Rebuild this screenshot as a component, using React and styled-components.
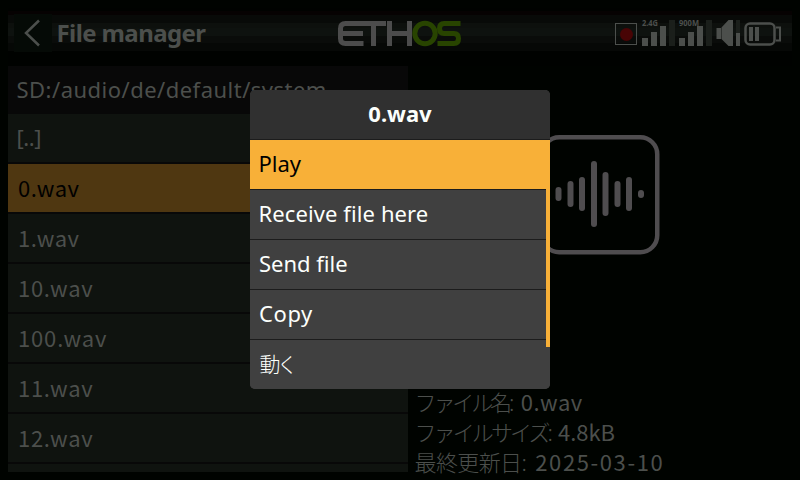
import React from "react";
import styled, { createGlobalStyle } from "styled-components";

const Global = createGlobalStyle`
  * { box-sizing: border-box; }
  body { margin: 0; background: #000300; }
`;

const Screen = styled.div`
  position: relative;
  width: 800px;
  height: 480px;
  overflow: hidden;
  display: flex;
  flex-direction: column;
  padding: 8px 8px 0;
  background: #000300;
  color: #4c4f4c;
  font: 400 22px/30px "Noto Sans", "Noto Sans CJK JP", sans-serif;
  white-space: pre;
`;

const TopBar = styled.header`
  display: grid;
  grid-template-columns: 1fr 126px 1fr;
  height: 58px;
  flex: none;
  background: linear-gradient(
    #000200 0 3px, #060202 3px 7px, #080a08 7px 15px, #0d100d 15px 20px,
    #0e120f 20px 28px, #0a0c0a 28px 35px, #060806 35px 43px, #000200 43px
  );
`;

const TitleGroup = styled.div`
  display: flex;
  padding: 6px 0 0 6px;
`;

const BackButton = styled.button`
  width: 38px;
  height: 38px;
  padding: 0;
  border: 0;
  background: #050a06;
  svg { display: block; }
`;

const Title = styled.h1`
  margin: 4px 0 0 4.5px;
  font-size: 24px;
  line-height: 30px;
  font-weight: 700;
  letter-spacing: -0.6px;
`;

const LogoSlot = styled.div`
  padding: 12px 0 0;
`;

const StatusArea = styled.div`
  display: flex;
  justify-content: flex-end;
  padding: 10px 10px 0 0;
`;

const Content = styled.main`
  display: grid;
  grid-template-columns: 400px 1fr;
  height: 406px;
`;

const FileList = styled.section`
  display: flex;
  flex-direction: column;
  gap: 2px;
  overflow: hidden;
  background: #080808;
`;

const Row = styled.div`
  flex: none;
  height: 48px;
  padding: 8px 0 0 8.5px;
  letter-spacing: ${(p) => p.$track ?? 0}px;
  background: ${(p) => (p.$selected ? "#4f3711" : "#0f130f")};
  color: ${(p) => (p.$selected ? "#000" : "inherit")};
`;

const PathRow = styled(Row)`
  height: 46px;
  background: #080808;
`;

const FileRow = styled(Row)`
  padding: 8px 0 0 10px;
  font-family: "Noto Sans CJK JP", sans-serif;
`;

const Preview = styled.section`
  display: flex;
  flex-direction: column;
  justify-content: space-between;
  padding: 69px 0 0 8px;
  > svg { margin-left: 124px; }
`;

const Details = styled.div`
  margin: 0 0 -5px -1.5px;
  font-weight: 300;
`;

const Detail = styled.div`
  height: 30px;
  letter-spacing: ${(p) => p.$track ?? 0}px;
`;

const Value = styled.span`
  margin-left: ${(p) => p.$gap ?? 0}px;
  font-family: "Noto Sans CJK JP", sans-serif;
  font-weight: 400;
  line-height: 1;
  letter-spacing: ${(p) => p.$track ?? 0}px;
`;

const Dialog = styled.div`
  position: absolute;
  left: 250px;
  top: 90px;
  width: 300px;
  height: 299px;
  overflow: hidden;
  border-radius: 5px;
  background: #404040;
  color: #fcfffc;
`;

const DialogTitle = styled.h2`
  margin: 0;
  height: 50px;
  padding-top: 8px;
  border-bottom: 1px solid #1c1c1c;
  background: #303030;
  text-align: center;
  font-size: 22px;
  line-height: 30px;
  font-weight: 700;
`;

const MenuItem = styled.div`
  height: 50px;
  padding: 8px 0 0 ${(p) => p.$x ?? 8}px;
  border-bottom: 1px solid #1c1c1c;
  background: ${(p) => (p.$active ? "#f8b038" : "#404040")};
  color: ${(p) => (p.$active ? "#000" : "inherit")};
  letter-spacing: ${(p) => p.$track ?? 0}px;
`;

const KanaMenuItem = styled(MenuItem)`
  padding-top: 9px;
  font-size: 21px;
  font-weight: 300;
`;

const ScrollThumb = styled.div`
  position: absolute;
  right: 0;
  top: 50px;
  width: 4px;
  height: 207px;
  background: #f8b038;
`;

const SignalLabel = styled.text`
  font: 700 8.5px "Noto Sans", sans-serif;
  fill: #4c4f4c;
`;

function Logo() {
  return (
    <svg width="126" height="28" fill="none" strokeWidth="5">
      <g stroke="#4c4c4c">
        <path d="M49 3.500H8.500Q3.500 3.500 3.500 8.500V18.500Q3.500 23.500 8.500 23.500H26.500M5 13.500H26" />
        <path d="M36.500 3.500V26" />
        <path d="M52.500 1V26M72.500 1V26M52 13.500H73" />
      </g>
      <g stroke="#284400">
        <circle cx="88" cy="13.500" r="10.200" />
        <path d="M123.500 3.500H107Q102.500 3.500 102.500 8.500T107 13.500H117Q121.500 13.500 121.500 18.500T117 23.500H100.500" />
      </g>
    </svg>
  );
}

function StatusIcons() {
  return (
    <svg width="168" height="30" fill="#4c4f4c">
      <rect x="1.500" y="5.500" width="21" height="21" fill="none" stroke="#4c4f4c" />
      <circle cx="12.500" cy="16.500" r="6.500" fill="#480405" />
      <SignalLabel x="28" y="8" textLength="16" lengthAdjust="spacingAndGlyphs">2.4G</SignalLabel>
      <path d="M28 20h6v8h-6zM37 14h6v14h-6zM46 8h6v20h-6z" />
      <path d="M55 2h6v26h-6zM92 2h6v26h-6z" fill="#1b1f1b" />
      <SignalLabel x="65" y="8" textLength="20" lengthAdjust="spacingAndGlyphs">900M</SignalLabel>
      <path d="M65 20h6v8h-6zM74 14h6v14h-6zM83 8h6v20h-6z" />
      <path d="M102.500 10h4.500v11h-4.500zM107.500 9.500L114.500 2h4.500v26h-4.500L107.500 21z" />
      <path d="M122 2h4v13h-4z" fill="#1b1f1b" />
      <path d="M122 15h4v13h-4z" />
      <rect x="131.500" y="5.500" width="29" height="21" rx="4.500" fill="none" stroke="#4c4f4c" strokeWidth="2.500" />
      <path d="M135 9h4v14h-4zM141 9h4v14h-4z" />
      <path d="M162 9.500h4v13h-4" fill="none" stroke="#4c4f4c" strokeWidth="2" />
    </svg>
  );
}

const bars = [
  [18.5, 55, 63], [30.5, 49, 69], [42, 45, 73], [54, 29, 89],
  [65.5, 40, 78], [77.5, 49, 69], [89, 45, 73], [101, 58, 60],
];

function Waveform() {
  return (
    <svg width="120" height="120" fill="none" stroke="#4f4d4f">
      <rect x="2.250" y="2.250" width="115" height="115" rx="17" strokeWidth="4.500" />
      {bars.map(([x, top, bottom]) => (
        <path key={x} d={`M${x} ${top}V${bottom}`} strokeWidth="6" strokeLinecap="round" />
      ))}
    </svg>
  );
}

export default function App() {
  return (
    <Screen>
      <Global />
      <TopBar>
        <TitleGroup>
          <BackButton aria-label="Back">
            <svg width="38" height="38" fill="none" stroke="#4c4f4c" strokeWidth="2.500">
              <path d="M25 6.500L12 19L25 31.500" />
            </svg>
          </BackButton>
          <Title>File manager</Title>
        </TitleGroup>
        <LogoSlot><Logo /></LogoSlot>
        <StatusArea><StatusIcons /></StatusArea>
      </TopBar>
      <Content>
        <FileList>
          <PathRow $track={0.48}>SD:/audio/de/default/system</PathRow>
          <Row $track={-0.4}>[..]</Row>
          <FileRow $track={0.5} $selected>0.wav</FileRow>
          <FileRow $track={0.5}>1.wav</FileRow>
          <FileRow $track={0.7}>10.wav</FileRow>
          <FileRow $track={0.85}>100.wav</FileRow>
          <FileRow $track={0.7}>11.wav</FileRow>
          <FileRow $track={0.7}>12.wav</FileRow>
          <FileRow />
        </FileList>
        <Preview>
          <Waveform />
          <Details>
            <Detail $track={-3.1}>ファイル名:<Value $gap={4} $track={0.5}> 0.wav</Value></Detail>
            <Detail $track={-2.9}>ファイルサイズ:<Value $gap={3}> 4.8kB</Value></Detail>
            <Detail $track={-0.6}>最終更新日:<Value $gap={2.5} $track={1.6}> 2025-03-10</Value></Detail>
          </Details>
        </Preview>
      </Content>
      <Dialog role="dialog">
        <DialogTitle>0.wav</DialogTitle>
        <MenuItem $active $x={8.5}>Play</MenuItem>
        <MenuItem $x={8.5} $track={0.1}>Receive file here</MenuItem>
        <MenuItem $x={9}>Send file</MenuItem>
        <MenuItem $x={9} $track={0.6}>Copy</MenuItem>
        <KanaMenuItem $x={9.5} $track={-3.5}>動く</KanaMenuItem>
        <ScrollThumb />
      </Dialog>
    </Screen>
  );
}
